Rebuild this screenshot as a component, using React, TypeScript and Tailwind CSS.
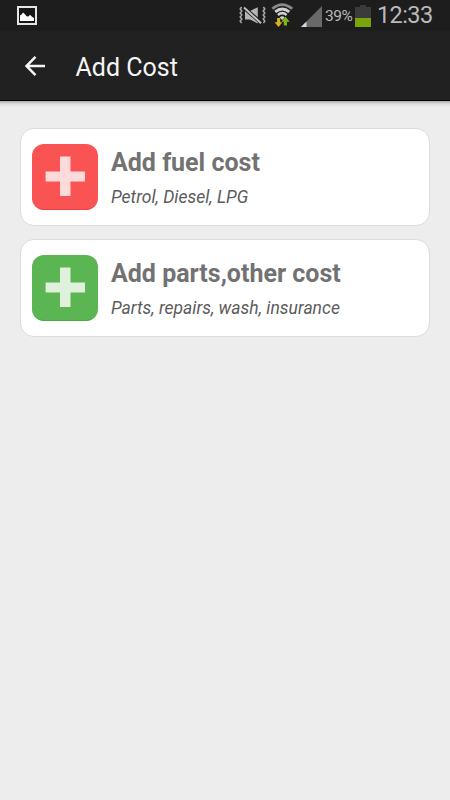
import { clsx } from 'clsx';

type CostOption = {
  title: string;
  subtitle: string;
  tile: string;
  plus: string;
};

const options: CostOption[] = [
  {
    title: 'Add fuel cost',
    subtitle: 'Petrol, Diesel, LPG',
    tile: 'bg-[#f95353] border-b-[#f43c40]',
    plus: 'text-[#fedada]',
  },
  {
    title: 'Add parts,other cost',
    subtitle: 'Parts, repairs, wash, insurance',
    tile: 'bg-[#5ab552] border-b-[#45b03c]',
    plus: 'text-[#dff0dc]',
  },
];

function StatusBar() {
  return (
    <div className="flex h-[31px] items-start bg-[#1d1d1d] text-[#b9b9b9]">
      {/* Screenshot notification */}
      <svg className="mt-[6px] ml-[17px] h-[19px] w-5 shrink-0" viewBox="0 0 20 19">
        <rect x="1" y="1" width="18" height="17" fill="#161616" stroke="#e4e4e4" strokeWidth="2" />
        <path d="M3 15V9.5L4.5 8.5L6 6.5L8 8.3L9.5 10.2L11.5 10.4L13 8.8L15 10.8L17 12V15Z" fill="#fff" />
      </svg>

      {/* Sound off */}
      <svg className="mt-[6px] ml-[202px] h-[20px] w-[27px] shrink-0" viewBox="0 0 27 20" fill="none">
        <path d="M2.6 1L1.2 3L2.8 5L1.2 7L2.8 9L1.2 11L2.8 13L1.2 15L2.6 17M24.4 1L25.8 3L24.2 5L25.8 7L24.2 9L25.8 11L24.2 13L25.8 15L24.4 17" stroke="#aaa" strokeWidth="1.5" />
        <path d="M6 5V13.5H11L18.8 17.5V1.2L11 5Z" fill="#b4b4b4" />
        <path d="M4.5 1.2L22.5 17" stroke="#1d1d1d" strokeWidth="3.8" />
        <path d="M5 1.5L22 17.2" stroke="#c0c0c0" strokeWidth="2" />
      </svg>

      {/* Wifi with traffic arrows */}
      <svg className="mt-[3px] ml-[5px] h-[25px] w-[23px] shrink-0" viewBox="0 0 23 25" fill="none">
        <path d="M1.3 5.8Q11.2 -2.6 21.2 5.8" stroke="#8a8a8a" strokeWidth="2.8" />
        <path d="M4.2 8.9Q11.2 3 18.3 8.9" stroke="#d0d0d0" strokeWidth="2.8" />
        <path d="M6.9 12Q11.2 8.4 15.6 12" stroke="#d0d0d0" strokeWidth="2.6" />
        <path d="M8.7 14.4Q11.2 12.2 13.7 14.4L11.2 17Z" fill="#d2d2d2" />
        <path d="M6.1 15H9.2V19.2H11.4L7.6 24L3.5 19.2H6.1Z" fill="#dbb21c" />
        <path d="M16 22.5H12.8V18.8H10.4L14.5 13.8L18.8 18.8H16Z" fill="#7fb711" />
      </svg>

      {/* Signal */}
      <svg className="mt-[6px] ml-[7px] h-[21px] w-[21px] shrink-0" viewBox="0 0 21 21">
        <path d="M0 21L21 0V21Z" fill="#696969" />
        <path d="M0 21L5.5 15.5V21Z" fill="#d8d8d8" />
      </svg>

      <span className="mt-[7px] ml-[3px] w-[30px] text-[15.5px] leading-[18px] tracking-[-0.5px] whitespace-nowrap">39%</span>

      {/* Battery */}
      <svg className="mt-[5px] h-[22px] w-4 shrink-0" viewBox="0 0 16 22">
        <path d="M0 2H5V0H11V2H16V22H0Z" fill="#3b3b3b" />
        <path d="M0 13H16V22H0Z" fill="#79a50b" />
      </svg>

      <span className="mt-[1px] ml-[6px] text-[23.5px] leading-[28px] tracking-[-0.6px] whitespace-nowrap">12:33</span>
    </div>
  );
}

function ActionBar() {
  return (
    <div className="flex h-[70px] items-center border-b border-black bg-[#212121] text-[#f5f5f5]">
      <svg className="mt-[1px] ml-[25px] h-5 w-5" viewBox="0 0 20 20" fill="none" stroke="currentColor" strokeWidth="2.5">
        <path d="M20 10H2M10.5 .9L1.6 10L10.5 19.1" />
      </svg>
      <h1 className="mt-[4px] ml-[30.5px] text-[25px] leading-[32px]">Add Cost</h1>
    </div>
  );
}

function CostCard({ title, subtitle, tile, plus }: CostOption) {
  return (
    <button className="flex h-[98px] w-full items-start rounded-[14px] border border-[#dcdcdc] bg-white text-left">
      <div className={clsx('mt-[15px] ml-[11px] h-[66px] w-[66px] shrink-0 rounded-[12px] border-b', tile)}>
        <svg className={clsx('h-[65px] w-[66px]', plus)} viewBox="0 0 66 65" fill="currentColor">
          <path d="M28 12.5H38.5V27.5H53V37.5H38.5V52H28V37.5H13.6V27.5H28Z" />
        </svg>
      </div>
      <div className="mt-[18.4px] ml-[13px] whitespace-nowrap">
        <div className="text-[25px] leading-[32px] font-bold text-[#727272]">{title}</div>
        <div className="mt-[7px] text-[17.5px] leading-[22px] text-[#5c5c5c] italic">{subtitle}</div>
      </div>
    </button>
  );
}

export default function App() {
  return (
    <div className="h-[800px] w-[450px] overflow-hidden bg-[#ededed] font-['Roboto',sans-serif]">
      <StatusBar />
      <ActionBar />
      <div className="h-[6px] bg-linear-to-b from-[#a8a8a8] via-[#dedede] to-[#ededed]" />
      <div className="flex flex-col gap-[13px] px-5 pt-[21px]">
        {options.map((option) => (
          <CostCard key={option.title} {...option} />
        ))}
      </div>
    </div>
  );
}
